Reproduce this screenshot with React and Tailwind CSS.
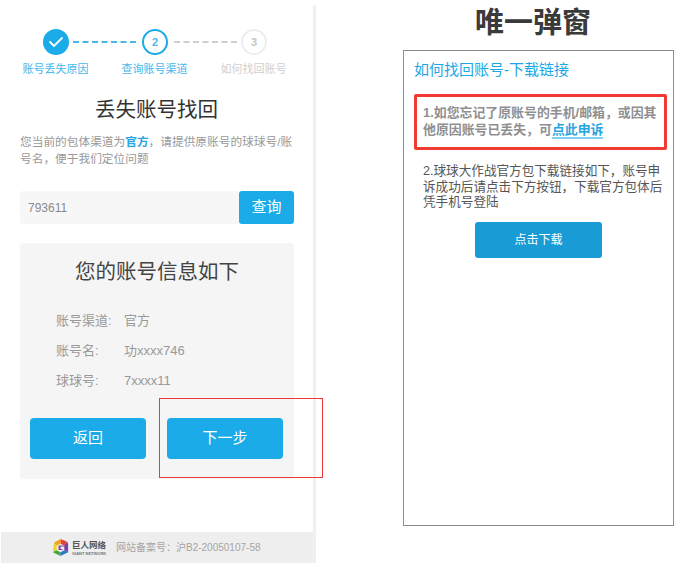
const font = { fontFamily: '"Liberation Sans", "Noto Sans CJK SC", sans-serif' }

function Stepper() {
  return (
    <div>
      <div className="ml-[23px] flex items-center">
        <div className="flex h-[26px] w-[26px] items-center justify-center rounded-full bg-[#1aabe8]">
          <svg width="16" height="12" viewBox="0 0 16 12" fill="none" stroke="white" strokeWidth="1.800">
            <path d="M1.500 5.500 L6 10 L14.500 1.500" />
          </svg>
        </div>
        <div className="ml-[4px] w-[63px] border-t-2 border-dashed border-[#45b8ea]" />
        <div className="ml-[6px] flex h-[26px] w-[26px] items-center justify-center rounded-full border-2 border-[#1aabe8] text-[11px] font-bold text-[#45b8ea]">2</div>
        <div className="ml-[6px] w-[63px] border-t-2 border-dashed border-[#cfcfcf]" />
        <div className="ml-[4px] flex h-[26px] w-[26px] items-center justify-center rounded-full border-2 border-[#eeeeee] text-[11px] font-bold text-[#c4c4c4]">3</div>
      </div>
      <div className="ml-[-14px] mt-[7px] grid w-[297px] grid-cols-3 text-center text-[11px] leading-[14px]">
        <span className="text-[#45b8ea]">账号丢失原因</span>
        <span className="text-[#45b8ea]">查询账号渠道</span>
        <span className="text-[#cfcfcf]">如何找回账号</span>
      </div>
    </div>
  )
}

function Logo() {
  return (
    <div className="flex items-center gap-[2px]">
      <svg width="19" height="21" viewBox="0 0 20 20">
        <path d="M10 1 L17 4 L14 8 L10 6 Z" fill="#e8412c" />
        <path d="M3 5 L10 1 L10 6 L6 8 Z" fill="#f4a11d" />
        <path d="M3 5 L6 8 L6 13 L2 15 Z" fill="#f2d21f" />
        <path d="M2 15 L6 13 L10 15 L10 19 Z" fill="#3eaa3c" />
        <path d="M10 19 L10 15 L14 13 L18 15 Z" fill="#2a78c8" />
        <path d="M18 15 L14 13 L14 9 L10 9 L10 11.500 L12 11.500 L12 12.500 L8 12.500 L8 8 L14 8 L17 4 L18 6 Z" fill="#7b3fa6" />
      </svg>
      <div className="flex w-[33px] flex-col items-start">
        <span className="whitespace-nowrap text-[8.500px] font-bold leading-[11px] text-[#555]">巨人网络</span>
        <span className="whitespace-nowrap text-[4px] font-bold leading-[5px] text-[#777]">GIANT NETWORK</span>
      </div>
    </div>
  )
}

export default function App() {
  return (
    <div className="relative flex h-[578px] w-[690px] overflow-hidden bg-white" style={font}>
      {/* 左侧 手机页面 */}
      <div className="mt-[5px] flex h-[558px] w-[316px] shrink-0 flex-col border-r-[3px] border-[#f0f0f0]">
        <div className="flex flex-1 flex-col px-5 pt-[24px]">
          <Stepper />

          <h1 className="mt-[19px] text-center text-[20.500px] leading-[30px] text-[#333]">丢失账号找回</h1>
          <p className="mt-[8px] w-[276px] text-[11.700px] leading-[17px] text-[#999]">
            您当前的包体渠道为<span className="font-bold text-[#2aa5e0]">官方</span>，请提供原账号的球球号/账号名，便于我们定位问题
          </p>

          <div className="mt-[24px] flex h-[33px] w-[274px]">
            <div className="flex flex-1 items-center rounded-l-[3px] bg-[#f7f7f7] pl-[8px] text-[12px] text-[#8a8a8a]">793611</div>
            <button className="w-[55px] rounded-[3px] bg-[#1aabe8] text-[15px] text-white">查询</button>
          </div>

          <div className="mt-[19px] h-[236px] w-[274px] rounded-[4px] bg-[#f5f5f5] px-[10px] pt-[14px]">
            <h2 className="text-center text-[20.500px] leading-[30px] text-[#444]">您的账号信息如下</h2>
            <dl className="mt-[25px] flex flex-col gap-[12px] pl-[26px] text-[13px] leading-[18px] text-[#999]">
              <div className="flex"><dt className="w-[68px]">账号渠道:</dt><dd>官方</dd></div>
              <div className="flex"><dt className="w-[68px]">账号名:</dt><dd>功xxxx746</dd></div>
              <div className="flex"><dt className="w-[68px]">球球号:</dt><dd>7xxxx11</dd></div>
            </dl>
            <div className="mt-[28px] flex gap-[21px]">
              <button className="h-[41px] w-[116px] rounded-[4px] bg-[#1aabe8] text-[15px] text-white">返回</button>
              <button className="h-[41px] w-[116px] rounded-[4px] bg-[#1aabe8] text-[15px] text-white">下一步</button>
            </div>
          </div>
        </div>

        {/* 底部备案 */}
        <div className="ml-[1px] flex h-[31px] items-center bg-[#eeeeee] pl-[50px]">
          <Logo />
          <span className="ml-[11px] whitespace-nowrap text-[10px] text-[#a5a5a5]">网站备案号：沪B2-20050107-58</span>
        </div>
      </div>

      {/* 右侧 弹窗说明 */}
      <div className="ml-[87px] flex w-[271px] flex-col">
        <h1 className="mt-[4px] pr-[11px] text-center text-[29px] font-bold leading-[38px] text-[#3a3a3a]">唯一弹窗</h1>
        <div className="mt-[8px] h-[476px] border border-[#8c8c8c] pl-[10px] pr-[6px] pt-[9px]">
          <h2 className="text-[15px] leading-[20px] text-[#1ea7e6]">如何找回账号-下载链接</h2>
          <div className="mt-[14px] h-[56px] rounded-[2px] border-[3px] border-[#f03a32] pl-[6px] pr-[2px] pt-[7px] text-[12.900px] font-bold leading-[17px] text-[#8f8f8f]">
            1.如您忘记了原账号的手机/邮箱，或因其他原因账号已丢失，可<span className="border-b-2 border-[#7fd0f2] text-[#2aa5e0]">点此申诉</span>
          </div>
          <p className="ml-[9px] mt-[14px] w-[243px] text-[12.600px] leading-[15.500px] text-[#555]">
            2.球球大作战官方包下载链接如下，账号申诉成功后请点击下方按钮，下载官方包体后凭手机号登陆
          </p>
          <button className="ml-[61px] mt-[11px] block h-[36px] w-[127px] rounded-[3px] bg-[#199cd6] text-[12px] text-white">点击下载</button>
        </div>
      </div>

      {/* 标注红框 */}
      <div className="absolute left-[159px] top-[398px] h-[80px] w-[164px] border border-[#f0353b]" />
    </div>
  )
}
